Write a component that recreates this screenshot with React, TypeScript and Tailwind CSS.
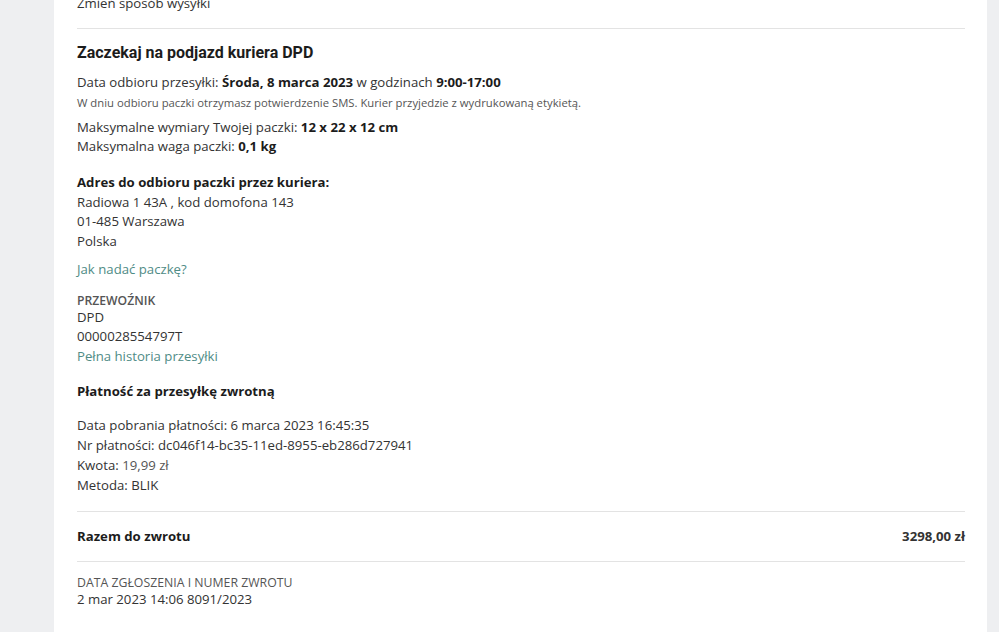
export default function App() {
  return (
    <div
      className="min-h-screen bg-[#eeeff1] pb-[2px] overflow-hidden"
      style={{ fontFamily: '"Open Sans", "Liberation Sans", sans-serif' }}
    >
      <div className="ml-[54px] w-[933px] bg-white px-[23px] pr-[22px] pb-[25px] text-[13.2px] text-[#333]">
        <div className="-mt-[7px] leading-[20px]">Zmień sposób wysyłki</div>
        <div className="mt-[15px] h-px bg-[#e3e3e3]" />

        <section className="pt-[12px]">
          <h2
            className="text-[16px] leading-[24px] font-bold text-[#1c1c1c]"
            style={{ fontFamily: "Roboto, sans-serif" }}
          >
            Zaczekaj na podjazd kuriera DPD
          </h2>
          <p className="mt-[7px] leading-[20px]">
            Data odbioru przesyłki: <b className="font-bold text-[#1c1c1c]">Środa, 8 marca 2023</b> w godzinach{" "}
            <b className="font-bold text-[#1c1c1c]">9:00-17:00</b>
          </p>
          <p className="mt-[2px] text-[11.3px] leading-[18px] text-[#555]">
            W dniu odbioru paczki otrzymasz potwierdzenie SMS. Kurier przyjedzie z wydrukowaną etykietą.
          </p>
          <p className="mt-[6px] leading-[19px]">
            Maksymalne wymiary Twojej paczki: <b className="font-bold text-[#1c1c1c]">12 x 22 x 12 cm</b>
          </p>
          <p className="leading-[19px]">
            Maksymalna waga paczki: <b className="font-bold text-[#1c1c1c]">0,1 kg</b>
          </p>

          <div className="mt-[17px] leading-[19.7px]">
            <p className="font-bold text-[#1c1c1c]">Adres do odbioru paczki przez kuriera:</p>
            <p>Radiowa 1 43A , kod domofona 143</p>
            <p>01-485 Warszawa</p>
            <p>Polska</p>
          </div>

          <a className="mt-[7px] block leading-[20px] text-[#4f8c86]" href="#">
            Jak nadać paczkę?
          </a>

          <div className="mt-[14px]">
            <p className="text-[12.2px] leading-[16px] font-semibold text-[#555]">PRZEWOŹNIK</p>
            <p className="leading-[17px]">DPD</p>
            <p className="leading-[20px]">0000028554797T</p>
            <a className="block leading-[20px] text-[#4f8c86]" href="#">
              Pełna historia przesyłki
            </a>
          </div>
        </section>

        <section className="mt-[15px]">
          <h3 className="font-bold leading-[20px] text-[#1c1c1c]">Płatność za przesyłkę zwrotną</h3>
          <div className="mt-[14px] leading-[20px]">
            <p>Data pobrania płatności: 6 marca 2023 16:45:35</p>
            <p>Nr płatności: dc046f14-bc35-11ed-8955-eb286d727941</p>
            <p>
              Kwota: <span className="text-[#555]">19,99 zł</span>
            </p>
            <p>Metoda: BLIK</p>
          </div>
        </section>

        <div className="mt-[16px] h-px bg-[#e3e3e3]" />
        <div className="flex items-center justify-between pt-[14px] pb-[15px] font-bold leading-[20px] text-[#1c1c1c]">
          <span>Razem do zwrotu</span>
          <span className="text-[#333]">3298,00 zł</span>
        </div>
        <div className="h-px bg-[#e3e3e3]" />

        <div className="pt-[13px]">
          <p className="text-[12.3px] leading-[16px] text-[#555]">DATA ZGŁOSZENIA I NUMER ZWROTU</p>
          <p className="leading-[16px]">2 mar 2023 14:06 8091/2023</p>
        </div>
      </div>
    </div>
  );
}
